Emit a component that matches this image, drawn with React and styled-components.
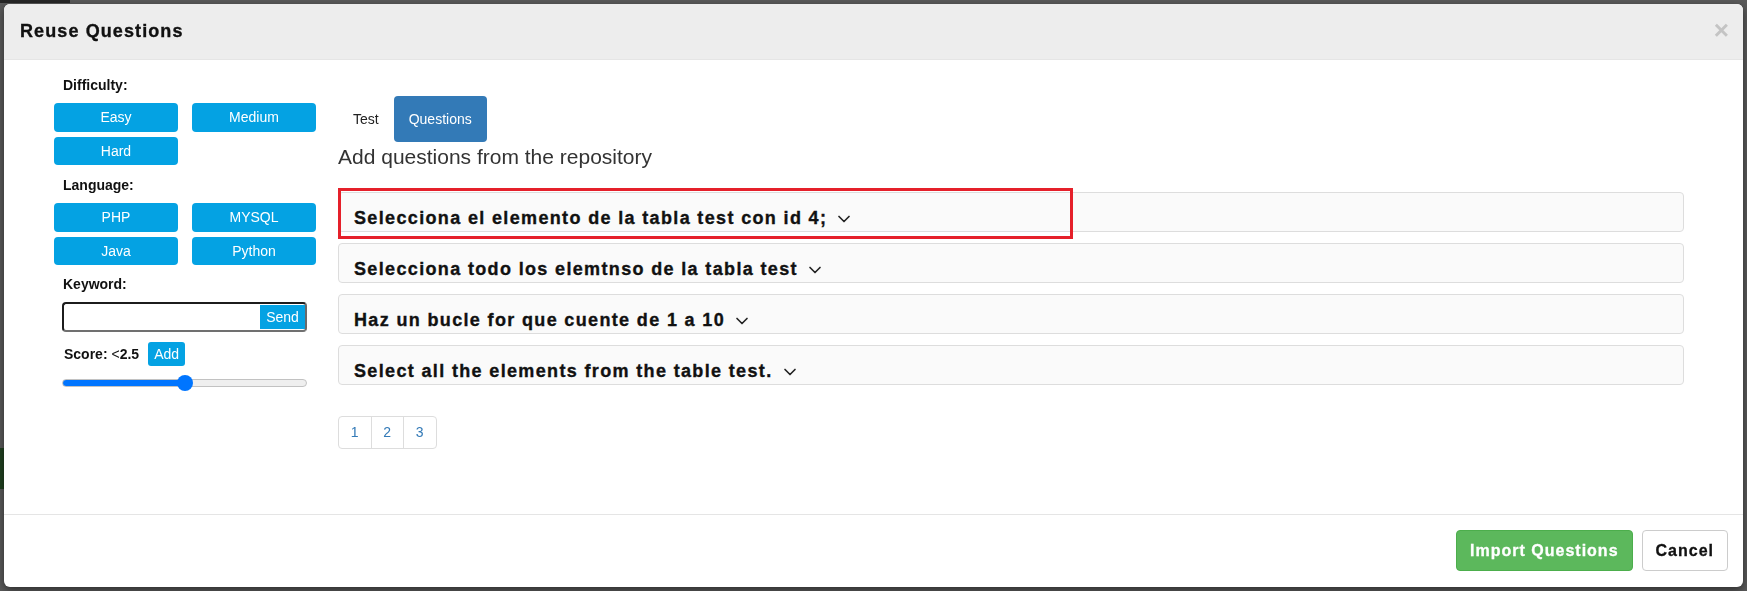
import React from "react";
import styled, { createGlobalStyle } from "styled-components";
import { ChevronDown } from "lucide-react";

const GlobalStyle = createGlobalStyle`
  html, body {
    margin: 0;
    padding: 0;
    height: 591px;
    overflow: hidden;
    background: #fff;
    font-family: "Liberation Sans", Arial, sans-serif;
  }
`;

const blue = "#04a2e3";

const BackPage = styled.div`
  height: 591px;
  .bar {
    height: 3px;
    width: 70px;
    background: #111;
    opacity: 0.6;
  }
  .green {
    margin-top: 445px;
    width: 120px;
    height: 41px;
    background: #5cb85c;
  }
`;

const Backdrop = styled.div`
  position: fixed;
  inset: 0;
  background: rgba(0, 0, 0, 0.65);
`;

const Modal = styled.div`
  position: fixed;
  top: 4px;
  left: 4px;
  right: 4px;
  height: 583px;
  background: #fff;
  border-radius: 6px;
  box-shadow: 0 3px 9px rgba(0, 0, 0, 0.5);
  display: flex;
  flex-direction: column;
  overflow: hidden;
`;

const Header = styled.div`
  height: 56px;
  box-sizing: border-box;
  background: #ededed;
  border-bottom: 1px solid #e5e5e5;
  display: flex;
  align-items: center;
  justify-content: space-between;
  padding: 0 14px 0 16px;
  h3 {
    margin: 0;
    font-size: 18px;
    font-weight: bold;
    letter-spacing: 1.1px;
    -webkit-text-stroke: 0.35px #111;
    color: #111;
  }
`;

const Close = styled.span`
  font-size: 26px;
  font-weight: bold;
  color: #c4c4c4;
  line-height: 1;
  margin-top: -4px;
`;

const Body = styled.div`
  height: 454px;
  box-sizing: border-box;
  display: flex;
  gap: 22px;
  padding: 15px 59px 0 50px;
`;

const Sidebar = styled.div`
  width: 262px;
  flex-shrink: 0;
`;

const Label = styled.div`
  font-size: 14px;
  font-weight: bold;
  line-height: 20px;
  color: #111;
  margin: ${(p) => p.$top || 0}px 0 8px 9px;
`;

const ButtonGrid = styled.div`
  display: grid;
  grid-template-columns: 124px 124px;
  grid-auto-rows: 28.5px;
  column-gap: 14px;
  row-gap: 5px;
`;

const FilterButton = styled.button`
  background: ${blue};
  color: #fff;
  border: none;
  border-radius: 4px;
  font-family: inherit;
  font-size: 14px;
  padding: 0;
`;

const SearchBox = styled.div`
  margin-left: 8px;
  width: 245px;
  height: 30px;
  box-sizing: border-box;
  border: 2px solid;
  border-color: #1c1c1c #6a6a6a #707070 #1c1c1c;
  border-radius: 4px;
  display: flex;
  padding: 1px 0 1px 1px;
  input {
    flex: 1;
    min-width: 0;
    border: none;
    outline: none;
    font-size: 14px;
  }
`;

const SendButton = styled.button`
  width: 45px;
  background: ${blue};
  color: #fff;
  border: none;
  font-family: inherit;
  font-size: 14px;
  padding: 0;
`;

const ScoreRow = styled.div`
  display: flex;
  align-items: baseline;
  gap: 9px;
  margin: 10px 0 0 10px;
  font-size: 14px;
  font-weight: bold;
  color: #111;
  .lt {
    font-weight: normal;
  }
`;

const AddButton = styled.button`
  height: 24px;
  padding: 0 6px;
  background: ${blue};
  color: #fff;
  border: none;
  border-radius: 3px;
  font-family: inherit;
  font-size: 14px;
`;

const Range = styled.input`
  -webkit-appearance: none;
  appearance: none;
  display: block;
  margin: 9px 0 0 8px;
  width: 245px;
  height: 16px;
  background: transparent;
  &::-webkit-slider-runnable-track {
    height: 8px;
    border-radius: 4px;
    box-sizing: border-box;
    border: 1px solid #c2c2c2;
    background: linear-gradient(to right, #0075ff 0 50%, #efefef 50% 100%);
  }
  &::-webkit-slider-thumb {
    -webkit-appearance: none;
    width: 16px;
    height: 16px;
    border-radius: 50%;
    background: #0075ff;
    margin-top: -5px;
  }
`;

const Main = styled.div`
  flex: 1;
  padding-top: 21px;
`;

const Tabs = styled.div`
  display: flex;
`;

const Tab = styled.div`
  padding: 10px 15px;
  line-height: 26px;
  font-size: 14px;
  border-radius: 4px;
  color: ${(p) => (p.$active ? "#fff" : "#222")};
  background: ${(p) => (p.$active ? "#337ab7" : "transparent")};
`;

const Heading = styled.h4`
  margin: 3px 0 23px;
  font-size: 21px;
  font-weight: normal;
  line-height: 24px;
  color: #333;
`;

const PanelList = styled.div`
  position: relative;
  display: flex;
  flex-direction: column;
  gap: 11px;
`;

const Panel = styled.div`
  height: 40px;
  box-sizing: border-box;
  background: #fafafa;
  border: 1px solid #dddddd;
  border-radius: 4px;
  padding: 11px 15px 0;
  font-size: 18px;
  font-weight: bold;
  letter-spacing: 1.35px;
  -webkit-text-stroke: 0.35px #111;
  line-height: 22px;
  color: #111;
  display: flex;
  align-items: center;
  svg {
    margin: 2px 0 0 7px;
    color: #222;
  }
`;

const Highlight = styled.div`
  position: absolute;
  top: -4px;
  left: 0;
  width: 735px;
  height: 51px;
  box-sizing: border-box;
  border: 3px solid #e5202a;
  pointer-events: none;
`;

const Pagination = styled.div`
  display: inline-flex;
  margin-top: 31px;
  border: 1px solid #dddddd;
  border-radius: 4px;
  overflow: hidden;
`;

const PageItem = styled.span`
  width: 31.5px;
  height: 31px;
  line-height: 31px;
  text-align: center;
  font-size: 14px;
  color: #337ab7;
  & + & {
    border-left: 1px solid #dddddd;
  }
`;

const Footer = styled.div`
  border-top: 1px solid #e5e5e5;
  padding: 15px 15px 0;
  display: flex;
  justify-content: flex-end;
  gap: 9px;
`;

const FooterButton = styled.button`
  height: 41px;
  padding: 0 13px;
  border-radius: 4px;
  font-family: inherit;
  font-size: 16px;
  font-weight: bold;
  letter-spacing: 1px;
  border: 1px solid ${(p) => (p.$primary ? "#4cae4c" : "#cccccc")};
  background: ${(p) => (p.$primary ? "#5cb85c" : "#fff")};
  color: ${(p) => (p.$primary ? "#fff" : "#111")};
  -webkit-text-stroke: 0.3px ${(p) => (p.$primary ? "#fff" : "#111")};
`;

const questions = [
  "Selecciona el elemento de la tabla test con id 4;",
  "Selecciona todo los elemtnso de la tabla test",
  "Haz un bucle for que cuente de 1 a 10",
  "Select all the elements from the table test.",
];

export default function App() {
  return (
    <>
      <GlobalStyle />
      <BackPage>
        <div className="bar" />
        <div className="green" />
      </BackPage>
      <Backdrop />
      <Modal>
        <Header>
          <h3>Reuse Questions</h3>
          <Close>×</Close>
        </Header>
        <Body>
          <Sidebar>
            <Label>Difficulty:</Label>
            <ButtonGrid>
              <FilterButton>Easy</FilterButton>
              <FilterButton>Medium</FilterButton>
              <FilterButton>Hard</FilterButton>
            </ButtonGrid>
            <Label $top={10}>Language:</Label>
            <ButtonGrid>
              <FilterButton>PHP</FilterButton>
              <FilterButton>MYSQL</FilterButton>
              <FilterButton>Java</FilterButton>
              <FilterButton>Python</FilterButton>
            </ButtonGrid>
            <Label $top={9}>Keyword:</Label>
            <SearchBox>
              <input type="text" />
              <SendButton>Send</SendButton>
            </SearchBox>
            <ScoreRow>
              <span>
                Score: <span className="lt">&lt;</span>2.5
              </span>
              <AddButton>Add</AddButton>
            </ScoreRow>
            <Range type="range" min="0" max="100" defaultValue="50" />
          </Sidebar>
          <Main>
            <Tabs>
              <Tab>Test</Tab>
              <Tab $active>Questions</Tab>
            </Tabs>
            <Heading>Add questions from the repository</Heading>
            <PanelList>
              {questions.map((q) => (
                <Panel key={q}>
                  {q}
                  <ChevronDown size={20} strokeWidth={2} />
                </Panel>
              ))}
              <Highlight />
            </PanelList>
            <Pagination>
              <PageItem>1</PageItem>
              <PageItem>2</PageItem>
              <PageItem>3</PageItem>
            </Pagination>
          </Main>
        </Body>
        <Footer>
          <FooterButton $primary>Import Questions</FooterButton>
          <FooterButton>Cancel</FooterButton>
        </Footer>
      </Modal>
    </>
  );
}
